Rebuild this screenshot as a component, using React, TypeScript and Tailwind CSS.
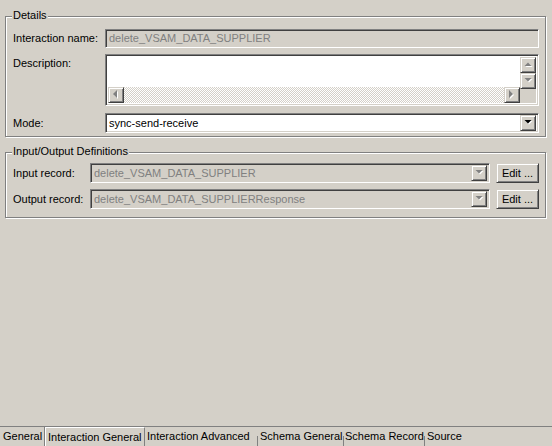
import React from 'react';

const sunken =
  'border border-t-[#808080] border-l-[#808080] border-r-white border-b-white shadow-[inset_1px_1px_0_#404040,inset_-1px_-1px_0_#d4d0c8]';
const raised =
  'border border-t-[#d4d0c8] border-l-[#d4d0c8] border-r-[#404040] border-b-[#404040] shadow-[inset_1px_1px_0_#fff,inset_-1px_-1px_0_#808080]';

type Dir = 'up' | 'down' | 'left' | 'right';

const Arrow: React.FC<{ dir: Dir; color?: string; emboss?: boolean }> = ({ dir, color = '#808080', emboss = true }) => {
  const pts: Record<Dir, string> = {
    up: '0.5,4 7.5,4 4,0.5',
    down: '0.5,0 7.5,0 4,3.5',
    left: '4,0 4,8 0,4',
    right: '0,0 0,8 4,4',
  };
  const vertical = dir === 'up' || dir === 'down';
  const w = vertical ? 8 : 5;
  const h = vertical ? 5 : 9;
  return (
    <svg width={w + 1} height={h + 1} viewBox={`0 0 ${w + 1} ${h + 1}`}>
      {emboss && <polygon points={pts[dir]} fill="#fff" transform="translate(1 1)" />}
      <polygon points={pts[dir]} fill={color} />
    </svg>
  );
};

const Btn: React.FC<{ className?: string; children?: React.ReactNode }> = ({ className = '', children }) => (
  <div className={`flex items-center justify-center bg-[#d4d0c8] ${raised} ${className}`}>{children}</div>
);

const Group: React.FC<{ title: string; className?: string; children: React.ReactNode }> = ({ title, className = '', children }) => (
  <div className={`relative border border-[#808080] shadow-[1px_1px_0_#fff,inset_1px_1px_0_#fff] ${className}`}>
    <span className="absolute left-[6px] top-[-8px] px-[1px] bg-[#d4d0c8] leading-[13px]">{title}</span>
    {children}
  </div>
);

const Combo: React.FC<{ value: string; disabled?: boolean; className?: string }> = ({ value, disabled, className = '' }) => (
  <div className={`flex items-center h-[20px] p-[2px] ${sunken} ${disabled ? 'bg-[#d4d0c8] text-[#808080]' : 'bg-white text-black'} ${className}`}>
    <span className="flex-1 pl-[1px] truncate leading-[13px]">{value}</span>
    <Btn className="w-[16px] h-[16px]">
      <Arrow dir="down" color={disabled ? '#808080' : '#000'} emboss={disabled} />
    </Btn>
  </div>
);

const Tab: React.FC<{ label: string; className?: string }> = ({ label, className = '' }) => (
  <div className={`flex items-center whitespace-nowrap ${className}`}>{label}</div>
);

const Sep: React.FC = () => <div className="self-end w-px h-[10px] bg-[#808080]" />;

export default function App() {
  return (
    <div className="h-screen w-full overflow-hidden bg-[#d4d0c8] flex flex-col text-black text-[11px] font-['Liberation_Sans',Arial,sans-serif]">
      <div className="flex-1 flex flex-col gap-[15px] pt-[16px] pl-[5px] pr-[6px]">
        <Group title="Details" className="h-[121px]">
          <div className="flex flex-col pt-[12px] pl-[7px] pr-[6px]">
            <div className="flex items-center">
              <span className="w-[92px] leading-[13px]">Interaction name:</span>
              <div className={`flex-1 h-[19px] flex items-center pl-[3px] bg-[#d4d0c8] text-[#808080] leading-[13px] ${sunken}`}>
                delete_VSAM_DATA_SUPPLIER
              </div>
            </div>
            <div className="flex mt-[6px]">
              <span className="w-[92px] pt-[3px] leading-[13px]">Description:</span>
              <div className={`flex-1 h-[52px] p-[2px] bg-white ${sunken}`}>
                <div className="flex h-full">
                  <div className="flex-1 flex flex-col">
                    <div className="flex-1" />
                    <div className="flex h-[16px]">
                      <Btn className="w-[16px] h-[16px]">
                        <Arrow dir="left" />
                      </Btn>
                      <div className="flex-1 bg-[image:conic-gradient(#fff_25%,#d4d0c8_0_50%,#fff_0_75%,#d4d0c8_0)] bg-[length:2px_2px]" />
                      <Btn className="w-[16px] h-[16px]">
                        <Arrow dir="right" />
                      </Btn>
                    </div>
                  </div>
                  <div className="w-[16px] flex flex-col">
                    <Btn className="w-[16px] h-[16px]">
                      <Arrow dir="up" />
                    </Btn>
                    <Btn className="w-[16px] h-[16px]">
                      <Arrow dir="down" />
                    </Btn>
                    <div className="flex-1 bg-[#d4d0c8]" />
                  </div>
                </div>
              </div>
            </div>
            <div className="flex items-center mt-[7px]">
              <span className="w-[92px] leading-[13px]">Mode:</span>
              <Combo value="sync-send-receive" className="flex-1" />
            </div>
          </div>
        </Group>

        <Group title="Input/Output Definitions" className="h-[66px]">
          <div className="flex flex-col gap-[6px] pt-[10px] pl-[7px] pr-[6px]">
            <div className="flex items-center">
              <span className="w-[77px] leading-[13px]">Input record:</span>
              <Combo value="delete_VSAM_DATA_SUPPLIER" disabled className="flex-1" />
              <Btn className="ml-[6px] w-[43px] h-[20px] leading-[13px]">Edit ...</Btn>
            </div>
            <div className="flex items-center">
              <span className="w-[77px] leading-[13px]">Output record:</span>
              <Combo value="delete_VSAM_DATA_SUPPLIERResponse" disabled className="flex-1" />
              <Btn className="ml-[6px] w-[43px] h-[20px] leading-[13px]">Edit ...</Btn>
            </div>
          </div>
        </Group>
      </div>

      <div className="h-[20px] flex border-t border-[#808080]">
        <Tab label="General" className="w-[45px] pl-[3px] border-r border-[#808080]" />
        <Tab label="Interaction General" className="w-[100px] pl-[2px] border-l border-t border-l-white border-t-white border-r border-r-[#808080]" />
        <Tab label="Interaction Advanced" className="w-[112px] pl-[2px]" />
        <Sep />
        <Tab label="Schema General" className="w-[85px] pl-[2px]" />
        <Sep />
        <Tab label="Schema Record" className="w-[80px] pl-[1px]" />
        <Sep />
        <Tab label="Source" className="pl-[2px]" />
      </div>
    </div>
  );
}
